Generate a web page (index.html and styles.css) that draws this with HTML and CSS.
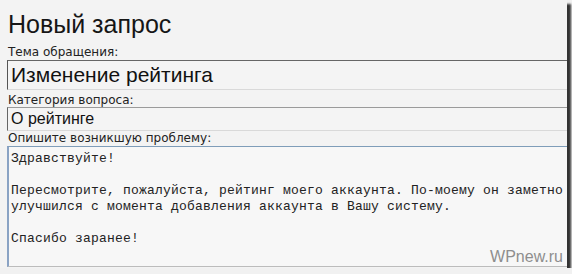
FILE: index.html
```html
<!DOCTYPE html>
<html lang="ru">
    <head>
        <meta charset="UTF-8" />
        <meta
            name="viewport"
            content="width=device-width, initial-scale=1.0"
        />
        <title>Новый запрос</title>
        <link rel="stylesheet" href="styles.css">
    </head>
    <body>
        <div class="shot">
            <h1 class="title">Новый запрос</h1>
            <form class="ticket">
                <label class="field-label" for="subject">Тема обращения:</label>
                <input
                    class="field field-big"
                    type="text"
                    id="subject"
                    name="subject"
                    value="Изменение рейтинга"
                />
                <label class="field-label" for="category">Категория вопроса:</label>
                <input
                    class="field field-mid"
                    type="text"
                    id="category"
                    name="category"
                    value="О рейтинге"
                />
                <label class="field-label" for="problem">Опишите возникшую проблему:</label>
                <textarea class="message" id="problem" name="problem" wrap="off">Здравствуйте!

Пересмотрите, пожалуйста, рейтинг моего аккаунта. По-моему он заметно
улучшился с момента добавления аккаунта в Вашу систему.

Спасибо заранее!</textarea>
            </form>
            <span class="watermark">WPnew.ru</span>
        </div>
    </body>
</html>
```

FILE: styles.css
```css
body {
    margin: 0;
    background: #f1f1f1;
}
.shot {
    position: relative;
    width: 567px;
    height: 268px;
    overflow: hidden;
    background: #f3f3f3;
    box-shadow: 4px 4px 2px #333;
}
.title {
    margin: 9px 0 6px 8px;
    font-family: 'Liberation Sans', Arial, sans-serif;
    font-size: 25px;
    font-weight: normal;
    line-height: 30px;
    color: #161616;
}
.ticket {
    display: flex;
    flex-direction: column;
    align-items: flex-start;
    padding-left: 7px;
}
.field-label {
    margin-left: 1px;
    font-family: 'DejaVu Sans', Verdana, sans-serif;
    font-size: 12px;
    line-height: 14px;
    color: #222;
}
.field {
    box-sizing: border-box;
    width: 600px;
    margin: 0;
    padding: 0 0 0 3px;
    background: #f4f4f4;
    border: none;
    border-bottom: 1px solid #d9d9d9;
    font-family: 'Liberation Sans', Arial, sans-serif;
    color: #111;
    outline: none;
}
.field-big {
    height: 30px;
    margin: 1px 0 3px;
    border-top: 1px solid #666;
    border-left: 1px solid #555;
    font-size: 21px;
}
.field-mid {
    height: 24px;
    border-top: 1px solid #9a9a9a;
    border-left: 1px solid #666;
    font-size: 16px;
}
.message {
    box-sizing: border-box;
    width: 600px;
    height: 121px;
    margin: 1px 0 0;
    padding: 4px 2px;
    background: #f7f7f7;
    border: none;
    border-top: 1px solid #7f9db9;
    border-left: 2px solid #8aa3c4;
    border-bottom: 1px solid #bcbcbc;
    font-family: 'Liberation Mono', 'Courier New', monospace;
    font-size: 13px;
    line-height: 16px;
    letter-spacing: 0.2px;
    color: #222;
    white-space: pre;
    resize: none;
    overflow: hidden;
    outline: none;
}
.watermark {
    position: absolute;
    right: 4px;
    bottom: 3px;
    font-family: 'Liberation Sans', Arial, sans-serif;
    font-size: 16px;
    line-height: 16px;
    color: #8e8e8e;
}
```
